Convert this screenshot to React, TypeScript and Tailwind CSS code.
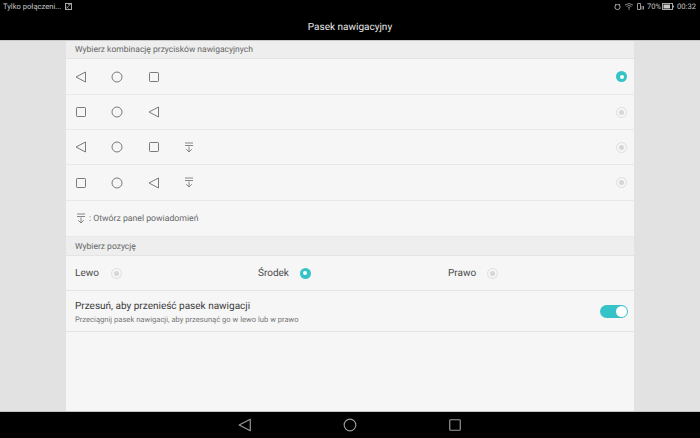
import React from "react";

const font = { fontFamily: '"Roboto", "Liberation Sans", sans-serif', textRendering: "geometricPrecision" as const };

function Back({ s = 12, c = "#7a7a7a", w = 1 }: { s?: number; c?: string; w?: number }) {
  return (
    <svg width={s} height={s} viewBox="0 0 12 12" fill="none" className="block">
      <path d="M1 6 L10.5 1 V11 Z" stroke={c} strokeWidth={w} strokeLinejoin="round" />
    </svg>
  );
}
function Home({ s = 12, c = "#7a7a7a", w = 1 }: { s?: number; c?: string; w?: number }) {
  return (
    <svg width={s} height={s} viewBox="0 0 12 12" fill="none" className="block">
      <circle cx="6" cy="6" r="5" stroke={c} strokeWidth={w} />
    </svg>
  );
}
function Square({ s = 12, c = "#7a7a7a", w = 1 }: { s?: number; c?: string; w?: number }) {
  return (
    <svg width={s} height={s} viewBox="0 0 12 12" fill="none" className="block">
      <rect x="1.5" y="1.5" width="9" height="9" rx="0.7" stroke={c} strokeWidth={w} />
    </svg>
  );
}
function Pull({ c = "#7a7a7a" }: { c?: string }) {
  return (
    <svg width="10" height="11" viewBox="0 0 10 11" fill="none" className="block">
      <path d="M1 1 H9 M1 3.5 H9 M5 4.5 V10 M2.2 7.2 L5 10 L7.8 7.2" stroke={c} strokeWidth="0.9" />
    </svg>
  );
}

function Radio({ on }: { on?: boolean }) {
  if (on)
    return (
      <span className="flex h-[11px] w-[11px] items-center justify-center rounded-full bg-[#35c3c8]">
        <span className="h-1 w-1 rounded-full bg-white" />
      </span>
    );
  return (
    <span className="flex h-[11px] w-[11px] items-center justify-center rounded-full border border-[#dedede]">
      <span className="h-[5px] w-[5px] rounded-full bg-[#d6d6d6]" />
    </span>
  );
}

function Section({ children, h, pt }: { children: React.ReactNode; h: string; pt: string }) {
  return (
    <div className={`flex items-center border-b border-[#e4e4e4] bg-[#eeeeee] pl-[9px] text-[8.5px] text-[#666666] ${pt} ${h}`}>
      {children}
    </div>
  );
}

function NavRow({ icons, pull, on, h }: { icons: React.ReactNode[]; pull?: boolean; on?: boolean; h: string }) {
  return (
    <div className={`flex items-center border-b border-[#e8e8e8] pr-[7px] pl-[9px] ${h}`}>
      <div className="flex w-[36px] justify-start">{icons[0]}</div>
      <div className="flex w-[37px] justify-start">{icons[1]}</div>
      <div className="flex w-[36px] justify-start">{icons[2]}</div>
      <div className="flex-1">{pull && <Pull />}</div>
      <Radio on={on} />
    </div>
  );
}

export default function App() {
  return (
    <div style={font} className="flex h-[438px] w-[700px] flex-col overflow-hidden bg-[#e2e2e2]">
      <header className="flex h-[41px] shrink-0 flex-col border-b border-[#c8c8c8] bg-black text-white">
        <div className="flex h-[14px] items-center justify-between pr-[4px] pl-[3px] text-[7.6px] text-[#c4c4c4]">
          <div className="flex items-center gap-[4px]">
            <span>Tylko połączeni...</span>
            <svg width="7" height="7" viewBox="0 0 7 7" fill="none">
              <rect x="0.5" y="0.5" width="6" height="6" stroke="#a8a8a8" />
              <path d="M1 5.5 L5.5 1.5 M3 1.5 H5.5 M1.5 3.5 L3.5 5.5" stroke="#a8a8a8" strokeWidth="0.7" />
            </svg>
          </div>
          <div className="flex items-center gap-[3px]">
            <svg width="7" height="8" viewBox="0 0 7 8" fill="none">
              <circle cx="3.5" cy="4" r="2.6" stroke="#a8a8a8" />
              <path d="M1 1 L2 2 M6 1 L5 2" stroke="#a8a8a8" strokeWidth="0.8" />
            </svg>
            <svg width="10" height="7" viewBox="0 0 9 7" fill="none">
              <path d="M0.5 2 Q4.5 -1 8.5 2 M2 3.5 Q4.5 1.5 7 3.5 M3.5 5 Q4.5 4 5.5 5 M4.5 5.5 V7" stroke="#a8a8a8" strokeWidth="0.8" />
            </svg>
            <svg width="7" height="7" viewBox="0 0 7 7" fill="none">
              <path d="M0.5 6.5 V0.5 H3.5 V6.5 Z M5 3 V6.5 M6.5 3 V6.5" stroke="#a8a8a8" strokeWidth="0.9" />
            </svg>
            <span>70%</span>
            <svg width="12" height="7" viewBox="0 0 12 7" fill="none" className="-ml-[2px]">
              <rect x="0.5" y="0.5" width="10" height="6" stroke="#a8a8a8" />
              <rect x="1.5" y="1.5" width="6.5" height="4" fill="#c9c9c9" />
              <rect x="11" y="2.5" width="1" height="2" fill="#a8a8a8" />
            </svg>
            <span>00:32</span>
          </div>
        </div>
        <div className="flex h-[26px] items-center justify-center pt-[1px] text-[10px] leading-none text-[#e8e8e8]">Pasek nawigacyjny</div>
      </header>

      <main className="mx-[66px] flex flex-1 flex-col bg-[#f6f6f6]">
        <Section h="h-[18px]" pt="pt-[1px]">Wybierz kombinację przycisków nawigacyjnych</Section>
        <NavRow h="h-[36px]" icons={[<Back key="a" />, <Home key="b" />, <Square key="c" />]} on />
        <NavRow h="h-[35px]" icons={[<Square key="a" />, <Home key="b" />, <Back key="c" />]} />
        <NavRow h="h-[35px]" icons={[<Back key="a" />, <Home key="b" />, <Square key="c" />]} pull />
        <NavRow h="h-[36px]" icons={[<Square key="a" />, <Home key="b" />, <Back key="c" />]} pull />
        <div className="flex h-[36px] items-center gap-[3px] border-b border-[#e8e8e8] pl-[10px] text-[8.7px] text-[#666666]">
          <Pull />
          <span className="pt-[2px]">: Otwórz panel powiadomień</span>
        </div>
        <Section h="h-[19px]" pt="pt-[2px]">Wybierz pozycję</Section>
        <div className="flex h-[35px] items-center border-b border-[#e4e4e4] pl-[9px] text-[10px] text-[#4a4a4a]">
          <div className="flex w-[183px] items-center gap-[12px]">
            <span className="pt-[1px]">Lewo</span>
            <Radio />
          </div>
          <div className="flex w-[190px] items-center gap-[11px]">
            <span className="pt-[1px]">Środek</span>
            <Radio on />
          </div>
          <div className="flex items-center gap-[11px]">
            <span className="pt-[1px]">Prawo</span>
            <Radio />
          </div>
        </div>
        <div className="flex h-[41px] items-center justify-between border-b border-[#e4e4e4] pr-[6px] pl-[9px]">
          <div className="flex flex-col gap-[2px] pt-[3px]">
            <span className="text-[10px] leading-[12px] text-[#3a3a3a]">Przesuń, aby przenieść pasek nawigacji</span>
            <span className="text-[7.6px] leading-[10px] text-[#777777]">Przeciągnij pasek nawigacji, aby przesunąć go w lewo lub w prawo</span>
          </div>
          <span className="flex h-[13px] w-[28px] items-center justify-end rounded-full bg-[#35c3c8] pr-[1px]">
            <span className="h-[11px] w-[11px] rounded-full bg-white" />
          </span>
        </div>
      </main>

      <footer className="flex h-[27px] shrink-0 items-center justify-center gap-[91px] border-t border-[#c4c4c4] bg-black pr-[1px]">
        <Back s={14} c="#9a9a9a" />
        <Home s={14} c="#9a9a9a" />
        <Square s={14} c="#9a9a9a" />
      </footer>
    </div>
  );
}
